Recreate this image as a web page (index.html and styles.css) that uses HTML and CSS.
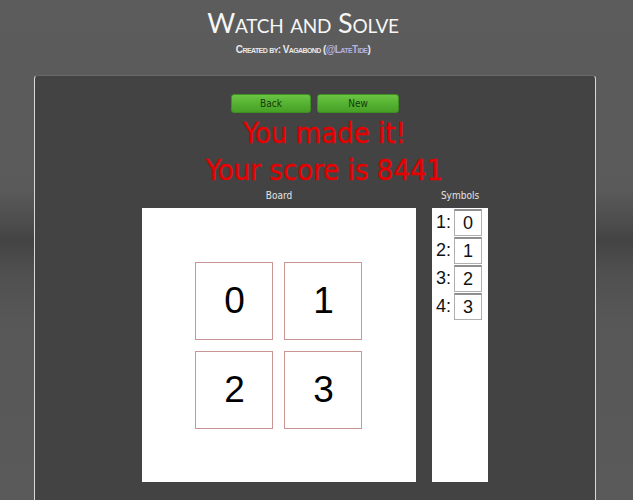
FILE: index.html
```html
<!DOCTYPE html>
<html>
<head>
<meta charset="utf-8">
<title>Watch and Solve</title>
<link rel="stylesheet" href="styles.css">
</head>
<body>
<header class="header">
  <h1 class="title">Watch and Solve</h1>
  <div class="credit">Created by: Vagabond (<span class="handle">@LateTide</span>)</div>
</header>
<main class="panel">
  <div class="buttons">
    <button class="btn btn-back">Back</button>
    <button class="btn btn-new">New</button>
  </div>
  <div class="result">
    <div class="result-line">You made it!</div>
    <div class="result-line">Your score is 8441</div>
  </div>
  <div class="game">
    <section class="board-col">
      <div class="label">Board</div>
      <div class="board">
        <div class="grid">
          <div class="tile">0</div>
          <div class="tile">1</div>
          <div class="tile">2</div>
          <div class="tile">3</div>
        </div>
      </div>
    </section>
    <section class="symbols-col">
      <div class="label">Symbols</div>
      <div class="symbols">
        <div class="sym-row"><span class="sym-key">1:</span><span class="sym-box">0</span></div>
        <div class="sym-row"><span class="sym-key">2:</span><span class="sym-box">1</span></div>
        <div class="sym-row"><span class="sym-key">3:</span><span class="sym-box">2</span></div>
        <div class="sym-row"><span class="sym-key">4:</span><span class="sym-box">3</span></div>
      </div>
    </section>
  </div>
</main>
</body>
</html>
```

FILE: styles.css
```css
html, body {
  margin: 0;
  padding: 0;
}
body {
  height: 500px;
  overflow: hidden;
  background: linear-gradient(to bottom, #5c5c5c 0px, #5a5a5a 190px, #4a4a4a 228px, #434343 240px, #4f4f4f 270px, #575757 320px, #5a5a5a 500px);
  font-family: "DejaVu Sans Condensed", "DejaVu Sans", sans-serif;
}
.header {
  text-align: center;
  padding-top: 6px;
  padding-right: 27px;
}
.title {
  margin: 0;
  font-family: "Lato", sans-serif;
  font-weight: 400;
  font-variant: small-caps;
  font-size: 27px;
  line-height: 34px;
  letter-spacing: -0.2px;
  color: #f6f6f6;
}
.credit {
  margin-top: 3px;
  font-family: "Liberation Sans Narrow", "Liberation Sans", sans-serif;
  font-weight: 700;
  font-variant: small-caps;
  font-size: 10px;
  line-height: 14px;
  letter-spacing: -0.6px;
  color: #e8e8e8;
}
.handle {
  color: #b4b0e0;
}
.panel {
  margin: 18px 0 0 34px;
  width: 560px;
  height: 440px;
  background: #434343;
  border-left: 1px solid #d8d8d8;
  border-right: 1px solid #d8d8d8;
  border-top: 1px solid #6a6a6a;
  border-radius: 4px 4px 0 0;
  padding-top: 18px;
  box-sizing: content-box;
}
.buttons {
  display: flex;
  justify-content: center;
  gap: 6px;
}
.btn {
  height: 19px;
  padding: 0;
  border: 1px solid #3f8f22;
  border-radius: 3px;
  background: linear-gradient(to bottom, #6cc444 0%, #55b232 50%, #46a025 100%);
  color: #173a0b;
  font-family: "DejaVu Sans Condensed", "DejaVu Sans", sans-serif;
  font-size: 10px;
  line-height: 17px;
}
.btn-back { width: 80px; }
.btn-new { width: 82px; }
.result {
  text-align: center;
  color: #e60000;
  font-size: 29px;
  line-height: 37px;
  margin-top: 2px;
  padding-left: 19px;
  -webkit-text-stroke: 0.3px #e60000;
}
.game {
  display: flex;
  justify-content: center;
  gap: 16px;
  margin-top: 0px;
}
.label {
  text-align: center;
  color: #e4e4e4;
  font-size: 10px;
  line-height: 14px;
  margin-bottom: 5px;
}
.board {
  width: 274px;
  height: 274px;
  background: #ffffff;
  display: flex;
  align-items: center;
  justify-content: center;
}
.grid {
  display: grid;
  grid-template-columns: 78px 78px;
  grid-auto-rows: 78px;
  gap: 11px;
  margin-left: -2px;
}
.tile {
  box-sizing: border-box;
  border: 1px solid #c99595;
  display: flex;
  align-items: center;
  justify-content: center;
  padding-left: 2px;
  font-family: "Liberation Sans", Arial, sans-serif;
  font-size: 37px;
  color: #000;
}
.symbols {
  width: 56px;
  height: 274px;
  background: #ffffff;
  box-sizing: border-box;
  padding: 1px 0 0 4px;
  display: flex;
  flex-direction: column;
  gap: 1px;
}
.sym-row {
  display: flex;
  align-items: center;
  gap: 3px;
}
.sym-key {
  width: 15px;
  text-align: right;
  font-family: "Liberation Sans", Arial, sans-serif;
  font-size: 18px;
  color: #111;
}
.sym-box {
  box-sizing: border-box;
  width: 28px;
  height: 27px;
  border: 1px solid #b0b0b0;
  border-top: 2px solid #8e8e8e;
  display: flex;
  align-items: center;
  justify-content: center;
  font-family: "Liberation Sans", Arial, sans-serif;
  font-size: 18px;
  color: #111;
}
```
